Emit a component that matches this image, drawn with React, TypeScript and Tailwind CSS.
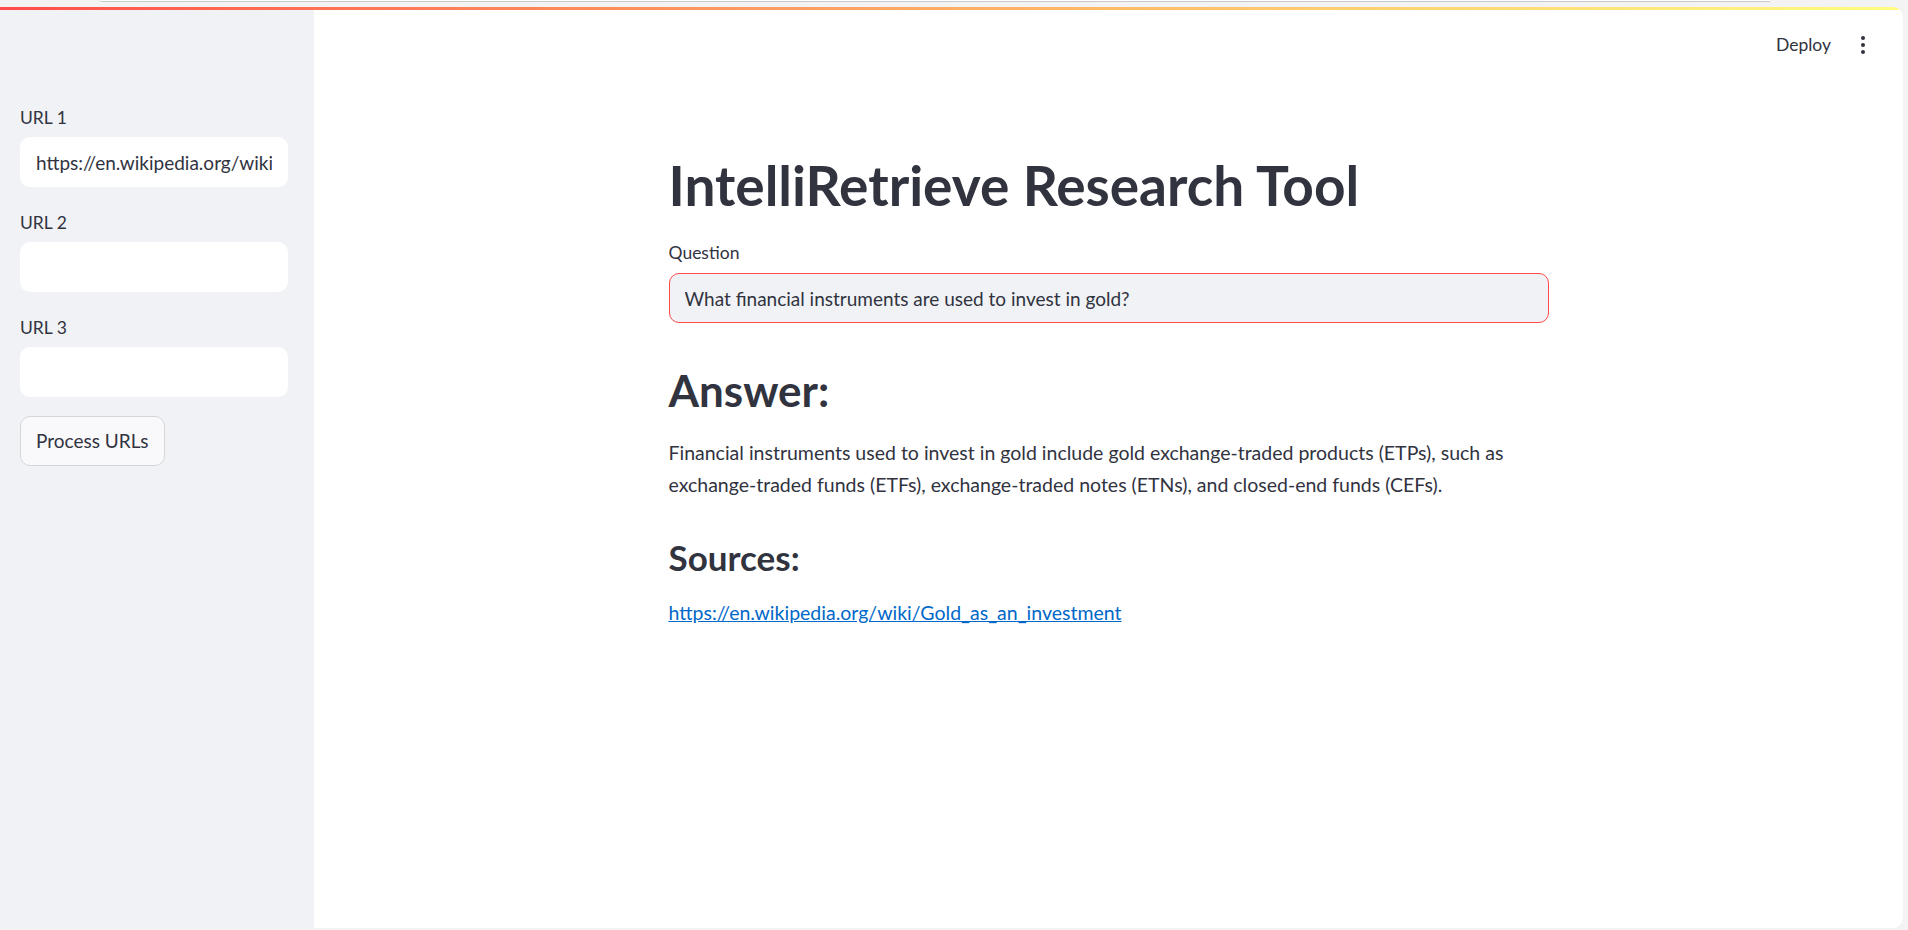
import { useState } from "react";

const inputCls =
  "h-[50px] w-full rounded-[10px] bg-white px-4 text-[19px] text-[#31333f] outline-none";

function SideField({ label, value, top }: { label: string; value: string; top: string }) {
  const [v, setV] = useState(value);
  return (
    <div className={top}>
      <label className="block h-[24px] text-[17.5px] leading-[24px] text-[#31333f]">{label}</label>
      <input className={`mt-[7px] ${inputCls}`} value={v} onChange={(e) => setV(e.target.value)} />
    </div>
  );
}

function Sidebar() {
  return (
    <aside className="flex w-[314px] shrink-0 flex-col bg-[#f0f2f6] pl-[20px] pr-[26px] pt-[96px]">
      <SideField label="URL 1" value="https://en.wikipedia.org/wiki/Gold_as_an_investment" top="" />
      <SideField label="URL 2" value="" top="mt-[24px]" />
      <SideField label="URL 3" value="" top="mt-[24px]" />
      <div className="mt-[19px]">
        <button
          type="button"
          className="h-[50px] rounded-[10px] border border-[#d5d6da] bg-[#f9f9fb] px-[15px] text-[19px] text-[#31333f]"
        >
          Process URLs
        </button>
      </div>
    </aside>
  );
}

function Header() {
  return (
    <div className="flex h-[70px] items-center justify-end gap-[26px] pr-[34px]">
      <span className="text-[17.5px] text-[#31333f]">Deploy</span>
      <div className="flex w-[12px] flex-col items-center gap-[3px]">
        <span className="h-[4px] w-[4px] rounded-full bg-[#31333f]" />
        <span className="h-[4px] w-[4px] rounded-full bg-[#31333f]" />
        <span className="h-[4px] w-[4px] rounded-full bg-[#31333f]" />
      </div>
    </div>
  );
}

export default function App() {
  const [q, setQ] = useState("What financial instruments are used to invest in gold?");
  return (
    <div className="flex h-[930px] w-[1908px] flex-col overflow-hidden bg-[#f3f3f3] font-['Lato',sans-serif]">
      {/* browser chrome strip */}
      <div className="h-[7px] shrink-0">
        <div className="ml-[100px] h-[2px] w-[1670px] rounded-bl-[8px] border-b border-[#c9c9c9] bg-white" />
      </div>
      <div className="mb-[2px] mr-[5px] flex flex-1 flex-col overflow-hidden rounded-r-[10px] bg-white">
        <div className="h-[3px] shrink-0 bg-gradient-to-r from-[#ff4b4b] to-[#fffd80]" />
        <div className="flex flex-1">
          <Sidebar />
          <main className="flex flex-1 flex-col">
            <Header />
            <div className="mx-auto w-[880px] pt-[72px]">
              <h1 className="text-[55px] font-bold leading-[66px] text-[#31333f]">IntelliRetrieve Research Tool</h1>
              <label className="mt-[23px] block text-[17.5px] leading-[24px] text-[#31333f]">Question</label>
              <input
                className="mt-[8px] h-[50px] w-full rounded-[10px] border border-[#ff4b4b] bg-[#f0f2f6] px-[15px] text-[19px] text-[#31333f] outline-none"
                value={q}
                onChange={(e) => setQ(e.target.value)}
              />
              <h2 className="mt-[40px] text-[44px] font-bold leading-[54px] text-[#31333f]">Answer:</h2>
              <p className="mt-[20px] text-[19.5px] leading-[32px] text-[#31333f]">
                Financial instruments used to invest in gold include gold exchange-traded products (ETPs), such as
                <br />
                exchange-traded funds (ETFs), exchange-traded notes (ETNs), and closed-end funds (CEFs).
              </p>
              <h3 className="mt-[35px] text-[35px] font-bold leading-[42px] text-[#31333f]">Sources:</h3>
              <a
                href="#"
                className="mt-[19px] block w-fit text-[19.5px] leading-[32px] text-[#0068c9] underline"
              >
                https://en.wikipedia.org/wiki/Gold_as_an_investment
              </a>
            </div>
          </main>
        </div>
      </div>
    </div>
  );
}
